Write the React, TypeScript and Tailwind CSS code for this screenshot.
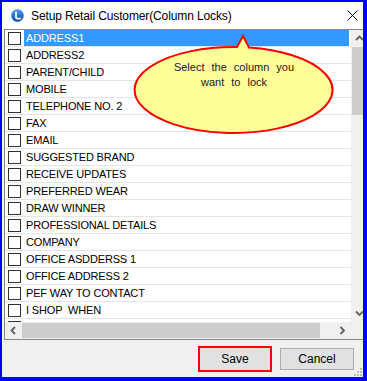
import React from "react";

const rows = [
  "ADDRESS1",
  "ADDRESS2",
  "PARENT/CHILD",
  "MOBILE",
  "TELEPHONE NO. 2",
  "FAX",
  "EMAIL",
  "SUGGESTED BRAND",
  "RECEIVE UPDATES",
  "PREFERRED WEAR",
  "DRAW WINNER",
  "PROFESSIONAL DETAILS",
  "COMPANY",
  "OFFICE ASDDERSS 1",
  "OFFICE ADDRESS 2",
  "PEF WAY TO CONTACT",
  "I SHOP  WHEN",
  "",
];

function Chevron({ dir }: { dir: "up" | "down" | "left" | "right" }) {
  const pts: Record<string, string> = {
    up: "1,6 4.5,2.5 8,6",
    down: "1,2.5 4.5,6 8,2.5",
    left: "6,1 2.5,4.5 6,8",
    right: "2.5,1 6,4.5 2.5,8",
  };
  return (
    <svg width="9" height="9" viewBox="0 0 9 9">
      <polyline points={pts[dir]} fill="none" stroke="#606060" strokeWidth="1.8" />
    </svg>
  );
}

export default function App() {
  return (
    <div
      className="relative w-[367px] h-[381px] overflow-hidden border-solid border-[#0000ff] border-l-2 border-t-2 border-r-4 border-b-4 bg-[#f0f0f0] flex flex-col text-black"
      style={{ fontFamily: '"Liberation Sans", Arial, sans-serif' }}
    >
      {/* Title bar */}
      <div className="h-[27px] shrink-0 bg-white flex items-center">
        <svg className="ml-[9px] shrink-0" width="13" height="13" viewBox="0 0 13 13">
          <defs>
            <linearGradient id="ig" x1="0" y1="0" x2="0" y2="1">
              <stop offset="0" stopColor="#4a9bf0" />
              <stop offset="1" stopColor="#0b4aa8" />
            </linearGradient>
          </defs>
          <circle cx="6.5" cy="6.5" r="6.3" fill="url(#ig)" />
          <path d="M5 3.2 V8.4 Q5 9.6 6.2 9.6 H9.4" fill="none" stroke="#fff" strokeWidth="1.7" strokeLinecap="round" />
        </svg>
        <span className="ml-[7px] text-[12px] leading-none tracking-[-0.12px]">Setup Retail Customer(Column Locks)</span>
        <svg className="ml-auto mr-[5px]" width="11" height="11" viewBox="0 0 11 11">
          <path d="M0.5 0.5 L10.5 10.5 M10.5 0.5 L0.5 10.5" stroke="#000" strokeWidth="1" />
        </svg>
      </div>

      {/* List box */}
      <div className="ml-[2px] w-[370px] h-[311px] shrink-0 border border-[#828790] bg-white flex flex-col">
        <div className="flex h-[292px]">
          <div className="w-[346px] overflow-hidden">
            {rows.map((r, i) => (
              <div key={i} className="h-[17px] border-b border-[#e5e5e5] flex items-center">
                <div className="ml-[3px] w-[13px] h-[13px] shrink-0 border border-[#333333] bg-white" />
                <div
                  className={
                    "ml-[3px] mr-[2px] flex-1 h-full flex items-center pl-[2px] text-[11px] tracking-[-0.15px] whitespace-pre " +
                    (i === 0 ? "bg-[#3399ff] text-white" : "text-black")
                  }
                >
                  {r}
                </div>
              </div>
            ))}
          </div>
          <div className="w-[17px] bg-[#f0f0f0] flex flex-col">
            <div className="h-[17px] flex items-center justify-center">
              <Chevron dir="up" />
            </div>
            <div className="h-[68px] mx-[1px] bg-[#cdcdcd]" />
            <div className="flex-1" />
            <div className="h-[17px] flex items-center justify-center">
              <Chevron dir="down" />
            </div>
          </div>
        </div>
        <div className="flex h-[17px]">
          <div className="w-[346px] bg-[#f0f0f0] flex">
            <div className="w-[17px] flex items-center justify-center">
              <Chevron dir="left" />
            </div>
            <div className="w-[298px] my-[1px] bg-[#cdcdcd]" />
            <div className="flex-1" />
            <div className="w-[17px] flex items-center justify-center">
              <Chevron dir="right" />
            </div>
          </div>
          <div className="w-[17px] bg-[#f0f0f0]" />
        </div>
      </div>

      {/* Bottom panel */}
      <div className="relative flex-1 flex items-center justify-end pr-[9px]">
        <button className="mr-[8px] w-[74px] h-[26px] border-2 border-[#ff0000] bg-[#e1e1e1] text-[12px] text-black">
          Save
        </button>
        <button className="w-[74px] h-[22px] border border-[#adadad] bg-[#e1e1e1] text-[12px] text-black">
          Cancel
        </button>
        <svg className="absolute right-0 bottom-0" width="9" height="9" viewBox="0 0 9 9">
          <rect x="6" y="0" width="2" height="2" fill="#bcbcbc" />
          <rect x="3" y="3" width="2" height="2" fill="#bcbcbc" />
          <rect x="6" y="3" width="2" height="2" fill="#bcbcbc" />
          <rect x="0" y="6" width="2" height="2" fill="#bcbcbc" />
          <rect x="3" y="6" width="2" height="2" fill="#bcbcbc" />
          <rect x="6" y="6" width="2" height="2" fill="#bcbcbc" />
        </svg>
      </div>

      {/* Callout balloon */}
      <svg
        className="absolute left-[-2px] top-[-2px] pointer-events-none"
        width="367"
        height="381"
        viewBox="0 0 367 381"
      >
        <path
          d="M237 47 L243 36 L249 47.5 A99 43 0 1 1 237 47 Z"
          fill="#ffff99"
          stroke="#ff0000"
          strokeWidth="2"
          strokeLinejoin="miter"
        />
      </svg>
      <div
        className="absolute left-[152px] top-[58px] w-[160px] text-center text-[11px] leading-[15px] text-[#1a1a1a] pointer-events-none"
        style={{ wordSpacing: "4px" }}
      >
        <div>Select the column you</div>
        <div>want to lock</div>
      </div>
    </div>
  );
}
